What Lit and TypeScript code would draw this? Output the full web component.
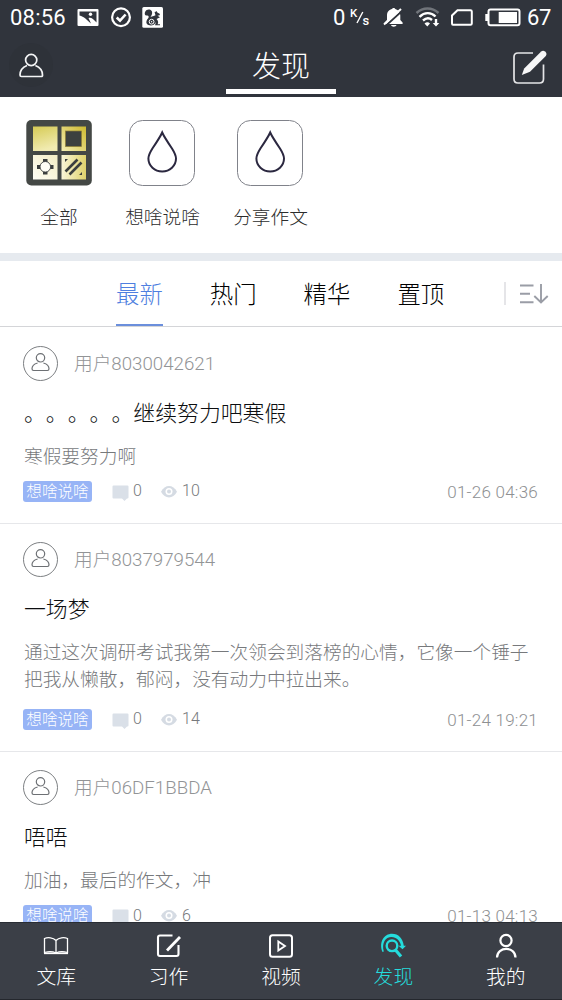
import { LitElement, html, css, svg } from "lit";
import { customElement, property } from "lit/decorators.js";
import { classMap } from "lit/directives/class-map.js";

interface Post {
  user: string;
  title: string;
  lines: string[];
  tag: string;
  comments: number;
  views: number;
  date: string;
}

const POSTS: Post[] = [
  { user: "用户8030042621", title: "。。。。。继续努力吧寒假", lines: ["寒假要努力啊"], tag: "想啥说啥", comments: 0, views: 10, date: "01-26 04:36" },
  { user: "用户8037979544", title: "一场梦", lines: ["通过这次调研考试我第一次领会到落榜的心情，它像一个锤子", "把我从懒散，郁闷，没有动力中拉出来。"], tag: "想啥说啥", comments: 0, views: 14, date: "01-24 19:21" },
  { user: "用户06DF1BBDA", title: "唔唔", lines: ["加油，最后的作文，冲"], tag: "想啥说啥", comments: 0, views: 6, date: "01-13 04:13" },
];

@customElement("status-bar")
class StatusBar extends LitElement {
  static styles = css`
    :host { display: flex; align-items: center; height: 36px; padding: 0 11px 0 10px; box-sizing: border-box; color: #fff; font-size: 22px; font-weight: 450; line-height: 34px; }
    svg { display: block; flex: none; }
    .time { width: 67px; letter-spacing: 0.2px; }
    .left { width: 86px; }
    .gap { flex: 1; }
    .zero { width: 16px; }
    .right { width: 178px; }
    .level { width: 24px; letter-spacing: -0.3px; }
    .unit { fill: #fff; font-size: 11.5px; font-weight: 500; }
    .small { font-size: 13px; }
  `;
  render() {
    return html`
      <span class="time">08:56</span>
      <svg class="left" width="86" height="36" viewBox="77 0 86 36">
        <path fill="#fff" d="M78.5 9H97.5Q98.5 9 98.5 10V25Q98.5 26 97.5 26H78.5Q77.5 26 77.5 25V10Q77.5 9 78.5 9Z"/>
        <path fill="#30343c" d="M79.5 11.5H96.5V22.500C93 18.500 91 17 88.500 18L91 23.500C87 20 84 16.500 79.500 15.500Z"/>
        <circle cx="90.5" cy="14.300" r="1.700" fill="#fff"/>
        <circle cx="121" cy="17.300" r="8.900" fill="none" stroke="#fff" stroke-width="2.200"/>
        <path d="M116.700 17.500L120 20.700L125.600 14.500" fill="none" stroke="#fff" stroke-width="2.600"/>
        <rect x="142.300" y="7" width="20.700" height="20.700" rx="1.500" fill="#fff"/>
        <path fill="#30343c" d="M148.500 25C145.500 24 146 20.500 148 18.500C149.500 16.500 148.500 15 146.500 15.500C144.700 15.500 144.300 13.500 145.200 11.700C146.500 9 150 8.800 151.500 10.800C153 13 151.500 15.500 150.500 17.300C152 16 154 16.300 155.500 15.300L154.600 12.300C155 11.300 156 12 156.500 11L157.600 12.800C159.400 13.200 160.500 14.500 159.600 15.300L157.500 15.800L160 17.300L156.600 19C158.500 21 158.500 23 157.500 24.200H160V25.300H155L156 22C154.500 25.500 151 26 148.500 25Z"/>
        <circle cx="151.600" cy="21.700" r="2.400" fill="none" stroke="#fff" stroke-width="1"/>
        <circle cx="151.600" cy="21.700" r=".7" fill="#fff"/>
      </svg>
      <span class="gap"></span>
      <span class="zero">0</span>
      <svg class="right" width="178" height="36" viewBox="349 0 178 36">
        <text class="unit" x="350" y="16.800">K</text>
        <path d="M357 23L362.800 12" stroke="#fff" stroke-width="1.400"/>
        <text class="unit small" x="362.500" y="25">s</text>
        <path fill="#fff" d="M384.500 24V22.500L387 20V15.500C387 11.500 389.500 9.500 392 9C392.300 7.500 395 7.500 395.300 9C398.500 10 400.300 12 400.300 15.500V20L402.600 22.500V24ZM391 25H396.500C396 27.300 391.500 27.300 391 25Z"/>
        <path d="M385.500 26L402.500 10.500" stroke="#30343c" stroke-width="1.800"/>
        <path d="M384 24.500L401 9" stroke="#fff" stroke-width="2"/>
        <g fill="none" stroke="#fff" stroke-width="2.400">
          <path d="M416.500 13C423 7 432 7 438.500 13" stroke="#70747a"/>
          <path d="M419.500 16.800C424.500 12 431 12 435.500 16.500"/>
          <path d="M423 20.500C426 17.800 429.500 17.800 432 20"/>
        </g>
        <path fill="#fff" d="M424.500 23.500Q427.500 21 430 23.500L427.300 26.500ZM434.800 19H437.200V23H439.300L436 26.500L432.700 23H434.800Z"/>
        <path d="M457.500 10.200H470.500Q471.800 10.200 471.800 11.500V23.500Q471.800 24.800 470.500 24.800H453Q452 24.800 452 23.500V15.500Z" fill="none" stroke="#fff" stroke-width="2"/>
        <rect x="488.500" y="9.500" width="31" height="15.800" rx="2" fill="none" stroke="#fff" stroke-width="2"/>
        <path fill="#fff" d="M485.300 14H488V21H485.300ZM498.700 12H517V23H498.700Z"/>
      </svg>
      <span class="level">67</span>
    `;
  }
}

@customElement("title-bar")
class TitleBar extends LitElement {
  static styles = css`
    :host { display: grid; grid-template-columns: 226px 110px 226px; height: 61px; color: #fff; }
    svg { display: block; }
    .title { text-align: center; font-size: 29px; line-height: 53px; padding-top: 5px; height: 58px; box-sizing: border-box; border-bottom: 5px solid #fff; font-weight: 300; white-space: nowrap; }
    .edit { justify-self: end; }
  `;
  render() {
    return html`
      <svg width="60" height="61" viewBox="0 36 60 61">
        <circle cx="31" cy="65" r="22" fill="#2e3239"/>
        <g fill="none" stroke="#f4f5f6" stroke-width="1.700">
          <circle cx="31.200" cy="60" r="5.600"/>
          <path d="M27 65.500C22 67.500 20 71.500 20 75Q20 76.500 21.500 76.500H41.200Q42.700 76.500 42.500 75C42.500 71.500 40.500 67.500 35.400 65.500"/>
        </g>
      </svg>
      <div class="title">发现</div>
      <svg class="edit" width="60" height="61" viewBox="502 36 60 61">
        <path d="M533 53H518Q514 53 514 57V79Q514 83 518 83H539.500Q543.500 83 543.500 79V64.500" fill="none" stroke="#e4e5e7" stroke-width="1.700"/>
        <path fill="#f6f6f7" d="M541.200 51.600Q543 50 545 51.500Q547.500 53.500 545.800 56L530 71.800L521.800 75L524.200 68.500Z"/>
      </svg>
    `;
  }
}

@customElement("category-row")
class CategoryRow extends LitElement {
  static styles = css`
    :host { display: flex; height: 156px; padding: 22px 0 0 5px; box-sizing: border-box; color: #2c2c2c; }
    .item { width: 108px; display: flex; flex-direction: column; align-items: center; font-size: 18.7px; font-weight: 300; }
    .item:first-child { width: 107px; margin-right: -4px; }
    .label { margin-top: 17px; line-height: 28px; padding-left: 1px; white-space: nowrap; }
    svg { display: block; }
  `;
  drop(label: string) {
    return html`<div class="item">
      <svg width="68" height="68" viewBox="0 0 68 68">
        <rect x="1.500" y="1.500" width="65" height="65" rx="13" fill="#fff" stroke="#80828a"/>
        <path d="M34.200 13.500Q36.200 18 44 29.500C46.500 33.500 48 36 48 39.500A13.800 13 0 0 1 20.400 39.500C20.400 36 21.900 33.500 24.400 29.500Q32.200 18 34.200 13.500Z" fill="none" stroke="#2b2840" stroke-width="2"/>
      </svg>
      <span class="label">${label}</span>
    </div>`;
  }
  render() {
    return html`
      <div class="item">
        <svg width="68" height="68" viewBox="0 0 68 68">
          <defs>
            <linearGradient id="a" x1="0" y1="0" x2=".3" y2="1"><stop stop-color="#d6cb55"/><stop offset="1" stop-color="#f1ebb1"/></linearGradient>
            <linearGradient id="b" x1="1" y1="0" x2="0" y2="1"><stop stop-color="#cdb92f"/><stop offset="1" stop-color="#f3edb2"/></linearGradient>
            <linearGradient id="c" x1="1" y1="0" x2="0" y2="1"><stop stop-color="#f3edc4"/><stop offset="1" stop-color="#fffef5"/></linearGradient>
            <linearGradient id="d" x1="1" y1="0" x2="0" y2="0"><stop stop-color="#dfd36c"/><stop offset="1" stop-color="#f9f5d8"/></linearGradient>
          </defs>
          <rect x="1.300" y="1" width="65.500" height="65.500" rx="5" fill="#444845"/>
          <rect x="8" y="7.500" width="24.500" height="24.500" fill="url(#a)"/>
          <rect x="36.500" y="7.500" width="24.500" height="24.500" fill="url(#b)"/>
          <rect x="40.500" y="12" width="16" height="15.500" fill="#3c403f" stroke="#8c7d35" stroke-width=".7"/>
          <rect x="8" y="36" width="24.500" height="24.500" fill="url(#c)"/>
          <rect x="36.500" y="36" width="24.500" height="24.500" fill="url(#d)"/>
          <g fill="#3c403f"><path d="M18 40H22.500V44H18ZM18 51.500H22.500V55.500H18ZM12 46H16V50H12ZM24.500 46H28.500V50H24.500Z"/></g>
          <circle cx="20.300" cy="47.800" r="5.300" fill="#fffef5" stroke="#3c403f" stroke-width=".9"/>
          <path d="M40.500 52.500L52.500 40.500M44.500 55.500L56.500 43.500" stroke="#3c403f" stroke-width="2.600"/>
          <path fill="#3c403f" d="M40 40H43L40 43ZM57 53V56H54Z"/>
        </svg>
        <span class="label">全部</span>
      </div>
      ${this.drop("想啥说啥")}${this.drop("分享作文")}
    `;
  }
}

@customElement("sort-tabs")
class SortTabs extends LitElement {
  static styles = css`
    :host { display: flex; height: 66px; box-sizing: border-box; padding-left: 116px; border-bottom: 1px solid #d4d5d8; gap: 47px; color: #000; }
    .tab { font-size: 23.4px; line-height: 61px; padding-top: 4px; height: 65px; width: 46.8px; box-sizing: border-box; font-weight: 300; white-space: nowrap; }
    .active { color: #4f7fe0; border-bottom: 2.5px solid #6b8fdc; }
    svg { display: block; margin-left: auto; }
  `;
  render() {
    return html`
      ${["最新", "热门", "精华", "置顶"].map((t, i) => html`<span class=${classMap({ tab: true, active: i === 0 })}>${t}</span>`)}
      <svg width="64" height="65" viewBox="498 261 64 65">
        <path d="M505 282V305" stroke="#dcdde0" stroke-width="1.500"/>
        <g fill="none" stroke="#9a9da6" stroke-width="1.900">
          <path d="M520 285.500H533.500M520 293.800H530M520 302.300H533.500M541 284V302M534.300 296L541 302.500L547.700 296"/>
        </g>
      </svg>
    `;
  }
}

@customElement("post-item")
class PostItem extends LitElement {
  @property({ attribute: false }) post!: Post;
  static styles = css`
    :host { display: block; padding: 18px 24px 21px 23px; border-bottom: 1px solid #e6e7ea; color: #77797c; font-weight: 300; }
    svg { display: block; flex: none; }
    .user { display: flex; align-items: center; gap: 16px; height: 35px; font-size: 18.7px; line-height: 37px; color: #929496; }
    .name { height: 35px; }
    .title { margin-top: 18px; padding-left: 1px; font-size: 21.86px; line-height: 30px; color: #0c0e10; }
    .body { margin-top: 15px; padding-left: 1px; font-size: 18.7px; line-height: 27px; white-space: nowrap; }
    .long { padding-bottom: 4.8px; }
    .meta { display: flex; align-items: center; margin-top: 10.2px; height: 21px; font-size: 16px; }
    .tag { width: 69px; height: 21px; border-radius: 3px; background: #97b4f6; color: #fff; text-align: center; font-size: 15.6px; line-height: 23px; margin-right: 20px; }
    .count { margin-left: 4px; line-height: 20px; }
    .num { width: 28px; }
    .eye + .count { margin-left: 5px; }
    .date { margin-left: auto; font-size: 17px; line-height: 22px; padding-top: 1px; letter-spacing: 0.25px; color: #8e9092; }
    :host(:first-child) { padding-top: 18.8px; }
  `;
  render() {
    const p = this.post;
    return html`
      <div class="user">
        <svg width="35" height="35" viewBox="0 0 35 35" fill="none" stroke="#6d7074">
          <circle cx="17.500" cy="17.500" r="17" stroke-width=".9"/>
          <circle cx="17.500" cy="11.800" r="4.200" stroke-width="1.200"/>
          <path d="M14.600 17C11 18 9 20.300 9 22.800Q9 24.500 10.500 24.500H24.500Q26 24.500 26 22.800C26 20.300 24 18 20.400 17" stroke-width="1.200"/>
        </svg>
        <span class="name">${p.user}</span>
      </div>
      <div class="title">${p.title}</div>
      <div class=${classMap({ body: true, long: p.lines.length > 1 })}>${p.lines.map((l) => html`<div>${l}</div>`)}</div>
      <div class="meta">
        <span class="tag">${p.tag}</span>
        <svg width="17" height="21" viewBox="0 0 17 21"><path fill="#dae0e8" d="M1.500 4.500H15.500Q16.500 4.500 16.500 5.500V16.500Q16.500 17.500 15.500 17.500H15L12.500 20L10 17.500H1.500Q.5 17.500 .5 16.500V5.500Q.5 4.500 1.500 4.500Z"/></svg>
        <span class="count num">${p.comments}</span>
        <svg class="eye" width="16" height="21" viewBox="0 0 16 21"><path fill="#d5dbe3" d="M0 10.700C4 3 12 3 16 10.700C12 18.300 4 18.300 0 10.700Z"/><circle cx="8" cy="10.600" r="3.500" fill="#fff"/><circle cx="8" cy="10.600" r="2" fill="#d5dbe3"/></svg>
        <span class="count">${p.views}</span>
        <span class="date">${p.date}</span>
      </div>
    `;
  }
}

const NAV = [
  { label: "文库", icon: svg`<path d="M20 18.500C17 15.500 12 15 8.500 16.500V30.500C12 29.500 17 29.500 20 31C23 29.500 28 29.500 31.500 30.500V16.500C28 15 23 15.500 20 18.500V31" stroke-width="1.300"/><path d="M8 31.300H32" stroke-width="1.700"/>` },
  { label: "习作", icon: svg`<path d="M23.500 13.500H11Q9 13.500 9 15.500V32Q9 34 11 34H27.500Q29.500 34 29.500 32V23" stroke-width="2.100"/><path d="M18 28.500L31 15" stroke-width="2.800"/>` },
  { label: "视频", icon: svg`<rect x="9" y="13.300" width="22" height="21.500" rx="2.500" stroke-width="2"/><path d="M17.300 19.500V28.500L24 24Z" stroke-width="1.800"/>` },
  { label: "发现", icon: svg`<path d="M9.500 30C5.500 20.500 11 11.800 19 11.800C25.500 11.800 29.800 16.500 30.800 23.700H33L29.500 27.300L25.500 23.700H28C27 18.500 23.500 15 18.500 15C12.500 15 8.500 21 10.800 29.500Z" fill="currentColor" stroke="none"/><circle cx="19" cy="23.800" r="5.300" stroke-width="2.400"/><path d="M22.500 28L28 34.500" stroke-width="3.200"/>` },
  { label: "我的", icon: svg`<circle cx="20" cy="18.500" r="5.600" stroke-width="2.200"/><path d="M11 35.500C11 24 29.500 24 29.500 35.500" stroke-width="2.200"/>` },
];

@customElement("bottom-nav")
class BottomNav extends LitElement {
  static styles = css`
    :host { display: grid; grid-template-columns: repeat(5, 1fr); height: 78px; box-sizing: border-box; background: #3b3f47; border-top: 1px solid #292d34; border-bottom: 1px solid #24272d; color: #fff; }
    .item { display: flex; flex-direction: column; align-items: center; font-size: 19.8px; line-height: 32px; font-weight: 300; }
    .on { color: #25dcdc; }
    svg { display: block; margin-top: -1px; }
  `;
  render() {
    return NAV.map((n, i) => html`<div class=${classMap({ item: true, on: i === 3 })}>
      <svg width="40" height="40" viewBox="0 0 40 40" fill="none" stroke="currentColor">${n.icon}</svg>
      <span>${n.label}</span>
    </div>`);
  }
}

@customElement("app-root")
class AppRoot extends LitElement {
  static styles = css`
    :host { display: flex; flex-direction: column; width: 562px; height: 1000px; overflow: hidden; background: #fff; font-family: Roboto, "Noto Sans CJK SC", sans-serif; text-spacing-trim: space-all; }
    .top { background: #30343c; flex: none; }
    category-row, sort-tabs, bottom-nav { flex: none; }
    .band { flex: none; height: 8px; background: #e6eaef; }
    .feed { flex: 1; min-height: 0; overflow: hidden; }
  `;
  render() {
    return html`
      <header class="top"><status-bar></status-bar><title-bar></title-bar></header>
      <category-row></category-row>
      <div class="band"></div>
      <sort-tabs></sort-tabs>
      <main class="feed">${POSTS.map((p) => html`<post-item .post=${p}></post-item>`)}</main>
      <bottom-nav></bottom-nav>
    `;
  }
}
